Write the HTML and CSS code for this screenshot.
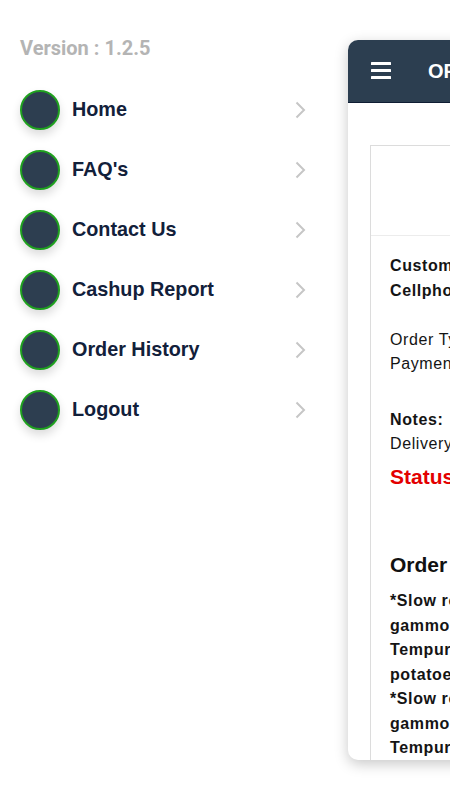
FILE: index.html
```html
<!DOCTYPE html>
<html lang="en">
<head>
<meta charset="utf-8">
<title>Menu</title>
<link rel="stylesheet" href="styles.css">
</head>
<body>
<div class="app">
  <aside class="drawer">
    <div class="version">Version : 1.2.5</div>
    <nav class="menu">
      <a class="row"><span class="dot"></span><span class="label">Home</span><svg class="chev" width="12" height="18" viewBox="0 0 12 18"><path d="M2.5 1.5 L10 9 L2.5 16.5" fill="none" stroke="#c6c6c6" stroke-width="2"/></svg></a>
      <a class="row"><span class="dot"></span><span class="label">FAQ's</span><svg class="chev" width="12" height="18" viewBox="0 0 12 18"><path d="M2.5 1.5 L10 9 L2.5 16.5" fill="none" stroke="#c6c6c6" stroke-width="2"/></svg></a>
      <a class="row"><span class="dot"></span><span class="label">Contact Us</span><svg class="chev" width="12" height="18" viewBox="0 0 12 18"><path d="M2.5 1.5 L10 9 L2.5 16.5" fill="none" stroke="#c6c6c6" stroke-width="2"/></svg></a>
      <a class="row"><span class="dot"></span><span class="label">Cashup Report</span><svg class="chev" width="12" height="18" viewBox="0 0 12 18"><path d="M2.5 1.5 L10 9 L2.5 16.5" fill="none" stroke="#c6c6c6" stroke-width="2"/></svg></a>
      <a class="row"><span class="dot"></span><span class="label">Order History</span><svg class="chev" width="12" height="18" viewBox="0 0 12 18"><path d="M2.5 1.5 L10 9 L2.5 16.5" fill="none" stroke="#c6c6c6" stroke-width="2"/></svg></a>
      <a class="row"><span class="dot"></span><span class="label">Logout</span><svg class="chev" width="12" height="18" viewBox="0 0 12 18"><path d="M2.5 1.5 L10 9 L2.5 16.5" fill="none" stroke="#c6c6c6" stroke-width="2"/></svg></a>
    </nav>
  </aside>
  <section class="panel">
    <header class="bar">
      <svg class="burger" width="20" height="18" viewBox="0 0 20 18"><rect x="0" y="0" width="20" height="3" rx="0.5" fill="#fff"/><rect x="0" y="7" width="20" height="3" rx="0.5" fill="#fff"/><rect x="0" y="14" width="20" height="3" rx="0.5" fill="#fff"/></svg>
      <span class="title">ORDER DETAILS</span>
    </header>
    <div class="body">
      <div class="box">
        <div class="top"></div>
        <div class="content">
          <div class="group">
            <div class="line"><b>Customer Name:</b> Thabo</div>
            <div class="line"><b>Cellphone:</b> 0821234567</div>
          </div>
          <div class="group gap1">
            <div class="line">Order Type: Delivery</div>
            <div class="line">Payment Method: Cash</div>
          </div>
          <div class="group gap2">
            <div class="line"><b>Notes:</b></div>
            <div class="line">Delivery to the front gate</div>
          </div>
          <div class="status">Status: Pending</div>
          <div class="heading">Order Items</div>
          <div class="items">
            <div class="line">*Slow roasted</div>
            <div class="line">gammon with</div>
            <div class="line">Tempura veg and</div>
            <div class="line">potatoes x1</div>
            <div class="line">*Slow roasted</div>
            <div class="line">gammon with</div>
            <div class="line">Tempura veg and</div>
          </div>
        </div>
      </div>
    </div>
  </section>
</div>
</body>
</html>
```

FILE: styles.css
```css
html, body {
  margin: 0;
  padding: 0;
  background: #ffffff;
}
body {
  width: 450px;
  height: 800px;
  overflow: hidden;
}
.app {
  display: flex;
  align-items: flex-start;
  width: 450px;
  height: 800px;
  overflow: hidden;
}
.drawer {
  flex: none;
  width: 348px;
  box-sizing: border-box;
  padding: 36px 42px 0 20px;
}
.version {
  font-family: Roboto, "Liberation Sans", sans-serif;
  font-weight: 700;
  font-size: 20px;
  line-height: 24px;
  color: #b4b4b4;
}
.menu {
  margin-top: 20px;
  display: flex;
  flex-direction: column;
}
.row {
  display: flex;
  align-items: center;
  height: 60px;
  text-decoration: none;
}
.dot {
  flex: none;
  width: 40px;
  height: 40px;
  box-sizing: border-box;
  border-radius: 50%;
  background: #2d3e50;
  border: 2px solid #1fa01f;
  box-shadow: 0 5px 10px rgba(0, 0, 0, 0.14);
}
.label {
  margin-left: 12px;
  font-family: "Liberation Sans", Arial, sans-serif;
  font-weight: 700;
  font-size: 19.8px;
  color: #12203a;
  margin-top: -2px;
}
.chev {
  margin-left: auto;
  flex: none;
}
.panel {
  flex: none;
  width: 420px;
  height: 720px;
  margin-top: 40px;
  background: #ffffff;
  border-radius: 10px 0 0 10px;
  box-shadow: 0 4px 14px rgba(0, 0, 0, 0.22);
  overflow: hidden;
  display: flex;
  flex-direction: column;
}
.bar {
  flex: none;
  height: 62px;
  background: #2c3e50;
  border-bottom: 1px solid #0f1d33;
  display: flex;
  align-items: center;
  padding-left: 23px;
}
.burger {
  flex: none;
  margin-top: -1px;
}
.title {
  margin-left: 37px;
  font-family: "Liberation Sans", Arial, sans-serif;
  font-weight: 700;
  font-size: 20px;
  color: #ffffff;
  white-space: nowrap;
}
.body {
  flex: 1;
  padding: 42px 0 0 22px;
  display: flex;
}
.box {
  flex: 1;
  border-left: 1px solid #dcdcdc;
  border-top: 1px solid #dcdcdc;
}
.top {
  height: 89px;
  border-bottom: 1px solid #ececec;
}
.content {
  padding: 18px 0 0 19px;
  font-family: "Liberation Sans", Arial, sans-serif;
  font-size: 16px;
  line-height: 24.5px;
  color: #141414;
}
.line {
  white-space: nowrap;
  letter-spacing: 0.6px;
}
.gap1 {
  margin-top: 24.5px;
}
.gap2 {
  margin-top: 31px;
}
.status {
  margin-top: 4px;
  font-weight: 700;
  font-size: 21px;
  line-height: 31.5px;
  color: #e30000;
  white-space: nowrap;
}
.heading {
  margin-top: 58px;
  font-weight: 700;
  font-size: 21px;
  line-height: 30px;
  color: #111;
  white-space: nowrap;
}
.items {
  margin-top: 9px;
  font-weight: 700;
}
```
